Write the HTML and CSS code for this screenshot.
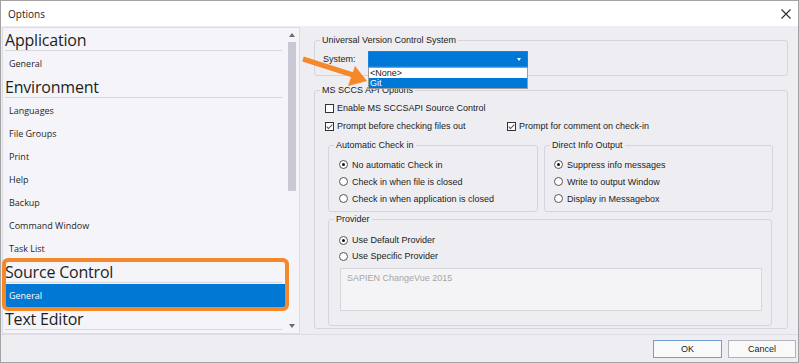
FILE: index.html
```html
<!DOCTYPE html>
<html lang="en">
<head>
  <meta charset="UTF-8">
  <meta name="viewport" content="width=device-width, initial-scale=1.0">
  <title>Options</title>
  <link rel="stylesheet" href="styles.css">
</head>
<body>
  <div class="window">
    <div class="titlebar">
      <span class="title">Options</span>
      <svg class="close" width="10" height="10" viewBox="0 0 10 10">
        <path d="M0.5 0.5L9.5 9.5M9.5 0.5L0.5 9.5" stroke="#2b2b2b" stroke-width="1.1" fill="none"/>
      </svg>
    </div>

    <div class="main">
      <!-- Category tree -->
      <div class="sidebar">
        <div class="tree">
          <div class="cat">Application</div>
          <div class="item">General</div>
          <div class="cat">Environment</div>
          <div class="item">Languages</div>
          <div class="item">File Groups</div>
          <div class="item">Print</div>
          <div class="item">Help</div>
          <div class="item">Backup</div>
          <div class="item">Command Window</div>
          <div class="item">Task List</div>
          <div class="cat">Source Control</div>
          <div class="item selected">General</div>
          <div class="cat">Text Editor</div>
          <div class="highlight"></div>
        </div>
        <div class="scrollbar">
          <div class="sb-btn"><span class="tri up"></span></div>
          <div class="thumb"></div>
          <div class="track"></div>
          <div class="sb-btn"><span class="tri down"></span></div>
        </div>
      </div>

      <!-- Settings page -->
      <div class="settings">
        <fieldset class="group">
          <legend>Universal Version Control System</legend>
          <div class="uvcs-body">
            <label class="system-label">System:</label>
            <div class="combo">
              <span class="combo-caret"></span>
              <ul class="combo-list">
                <li>&lt;None&gt;</li>
                <li class="active">Git</li>
              </ul>
            </div>
          </div>
        </fieldset>

        <fieldset class="group sccs">
          <legend>MS SCCS API Options</legend>
          <div class="sccs-body">
            <div class="check-row">
              <label class="opt"><span class="check"></span>Enable MS SCCSAPI Source Control</label>
            </div>
            <div class="check-row two">
              <label class="opt"><span class="check on"></span>Prompt before checking files out</label>
              <label class="opt"><span class="check on"></span>Prompt for comment on check-in</label>
            </div>

            <div class="subgroups">
              <fieldset class="group">
                <legend>Automatic Check in</legend>
                <div class="radio-list">
                  <label class="opt"><span class="radio on"></span>No automatic Check in</label>
                  <label class="opt"><span class="radio"></span>Check in when file is closed</label>
                  <label class="opt"><span class="radio"></span>Check in when application is closed</label>
                </div>
              </fieldset>
              <fieldset class="group">
                <legend>Direct Info Output</legend>
                <div class="radio-list narrow">
                  <label class="opt"><span class="radio on"></span>Suppress info messages</label>
                  <label class="opt"><span class="radio"></span>Write to output Window</label>
                  <label class="opt"><span class="radio"></span>Display in Messagebox</label>
                </div>
              </fieldset>
            </div>

            <fieldset class="group provider">
              <legend>Provider</legend>
              <div class="provider-body">
                <label class="opt"><span class="radio on"></span>Use Default Provider</label>
                <label class="opt"><span class="radio"></span>Use Specific Provider</label>
                <div class="provider-box">SAPIEN ChangeVue 2015</div>
              </div>
            </fieldset>
          </div>
        </fieldset>
      </div>
    </div>

    <div class="footer">
      <button class="btn default">OK</button>
      <button class="btn">Cancel</button>
    </div>

    <!-- annotation arrow -->
    <svg class="pointer" width="72" height="45" viewBox="0 0 72 45">
      <path d="M3 9L53 25" stroke="#f5892a" stroke-width="5" fill="none"/>
      <polygon points="67,31 55,16 48,36" fill="#f5892a"/>
    </svg>
  </div>
</body>
</html>
```

FILE: styles.css
```css
* {
  box-sizing: border-box;
}

body {
  margin: 0;
  font-family: "Liberation Sans", Arial, sans-serif;
  color: #1b1b1b;
}

.window {
  position: relative;
  width: 799px;
  height: 363px;
  border: 1px solid #a3a3a3;
  background: #eeeef2;
  display: flex;
  flex-direction: column;
}

.titlebar {
  height: 25px;
  background: #fff;
  display: flex;
  align-items: center;
  justify-content: space-between;
  padding: 0 7px 0 7px;
}

.title {
  font-family: "Open Sans", sans-serif;
  font-size: 10px;
  color: #1b1b1b;
}

.main {
  height: 308px;
  display: flex;
}

/* left tree */
.sidebar {
  width: 298px;
  height: 307px;
  margin: 1px 0 0 1px;
  border: 1px solid #dcdce4;
  background: #f5f5f9;
  display: flex;
}

.tree {
  position: relative;
  width: 284px;
  font-family: "Open Sans", sans-serif;
  color: #1e1e1e;
}

.cat {
  height: 23px;
  margin: 0 5px 1px 2px;
  padding-top: 3px;
  font-size: 16px;
  line-height: 19px;
  letter-spacing: -0.2px;
  border-bottom: 1px solid #d6d6de;
}

.item {
  height: 23px;
  line-height: 23px;
  padding-left: 6px;
  font-size: 9px;
}

.item.selected {
  background: #0078d4;
  color: #fff;
}

.highlight {
  position: absolute;
  left: -1px;
  top: 230px;
  width: 287px;
  height: 53px;
  border: 4px solid #f5892a;
  border-radius: 6px;
}

.scrollbar {
  width: 10px;
  margin-right: 2px;
  display: flex;
  flex-direction: column;
}

.sb-btn {
  height: 14px;
  display: flex;
  align-items: center;
  justify-content: center;
}

.tri {
  width: 0;
  height: 0;
  border-left: 3.5px solid transparent;
  border-right: 3.5px solid transparent;
}

.tri.up {
  border-bottom: 4px solid #6a6a72;
}

.tri.down {
  border-top: 4px solid #6a6a72;
}

.thumb {
  height: 149px;
  margin: 0 1px;
  background: #c9c9d6;
}

.track {
  flex: 1;
}

/* settings page */
.settings {
  flex: 1;
  padding: 8px 10px 0 14px;
  font-size: 9px;
}

.group {
  margin: 0;
  padding: 0;
  min-width: 0;
  border: 1px solid #d4d4dc;
  border-radius: 3px;
}

.group legend {
  margin-left: 5px;
  padding: 0 2px;
  font-size: 9px;
  line-height: 12px;
}

.uvcs-body {
  display: flex;
  align-items: center;
  padding: 5px 0 8px 8px;
}

.system-label {
  width: 45px;
}

.combo {
  position: relative;
  width: 160px;
  height: 16px;
  background: #0078d7;
  border: 1px solid #1a84dc;
}

.combo-caret {
  position: absolute;
  right: 6px;
  top: 6px;
  border-left: 2.5px solid transparent;
  border-right: 2.5px solid transparent;
  border-top: 3px solid #fff;
}

.combo-list {
  position: absolute;
  z-index: 2;
  left: -1px;
  top: 15px;
  width: 160px;
  margin: 0;
  padding: 0;
  list-style: none;
  background: #fff;
  border: 1px solid #9a9a9a;
}

.combo-list li {
  height: 10px;
  line-height: 10px;
  padding-left: 1px;
}

.combo-list li.active {
  background: #0078d7;
  color: #fff;
}

.sccs {
  margin-top: 8px;
}

.sccs-body {
  padding: 3px 14px 2px 10px;
}

.check-row {
  height: 18px;
  display: flex;
  align-items: center;
}

.check-row.two {
  display: grid;
  grid-template-columns: 182px 1fr;
  align-items: center;
}

.opt {
  display: flex;
  align-items: center;
  white-space: nowrap;
}

.check {
  position: relative;
  width: 9px;
  height: 9px;
  margin-right: 3px;
  background: #fff;
  border: 1px solid #333;
}

.check.on::after {
  content: "";
  position: absolute;
  left: 2px;
  top: 0;
  width: 2px;
  height: 5px;
  border: solid #555;
  border-width: 0 1px 1px 0;
  transform: rotate(45deg);
}

.radio {
  position: relative;
  width: 9px;
  height: 9px;
  margin-right: 4px;
  background: #fff;
  border: 1px solid #555;
  border-radius: 50%;
}

.radio.on::after {
  content: "";
  position: absolute;
  left: 2px;
  top: 2px;
  width: 3px;
  height: 3px;
  border-radius: 50%;
  background: #111;
}

.subgroups {
  display: grid;
  grid-template-columns: 210px 1fr;
  gap: 6px;
  margin: 4px 0 0 3px;
}

.radio-list {
  padding: 5px 0 4px 10px;
}

.radio-list.narrow {
  padding-left: 9px;
}

.radio-list .opt {
  height: 17px;
}

.provider {
  margin: 1px 1px 0 3px;
}

.provider-body {
  padding: 7px 8px 14px 10px;
}

.provider-body .opt {
  height: 16px;
}

.provider-box {
  height: 43px;
  margin: 4px 1px 0 1px;
  padding: 4px 6px;
  background: #f4f4f7;
  border: 1px solid #d6d6dd;
  color: #a6a6a6;
}

/* footer buttons */
.footer {
  height: 28px;
  border-top: 1px solid #dcdce2;
  display: flex;
  justify-content: flex-end;
  align-items: flex-start;
  gap: 6px;
  padding: 5px 2px 0 0;
}

.btn {
  width: 68px;
  height: 18px;
  padding: 0;
  font-family: "Liberation Sans", Arial, sans-serif;
  font-size: 9px;
  color: #1b1b1b;
  background: #f9f9fa;
  border: 1px solid #b4b4b8;
}

.btn.default {
  width: 69px;
  border-color: #6f9fd3;
}

.pointer {
  position: absolute;
  left: 299px;
  top: 49px;
  z-index: 3;
}
```
